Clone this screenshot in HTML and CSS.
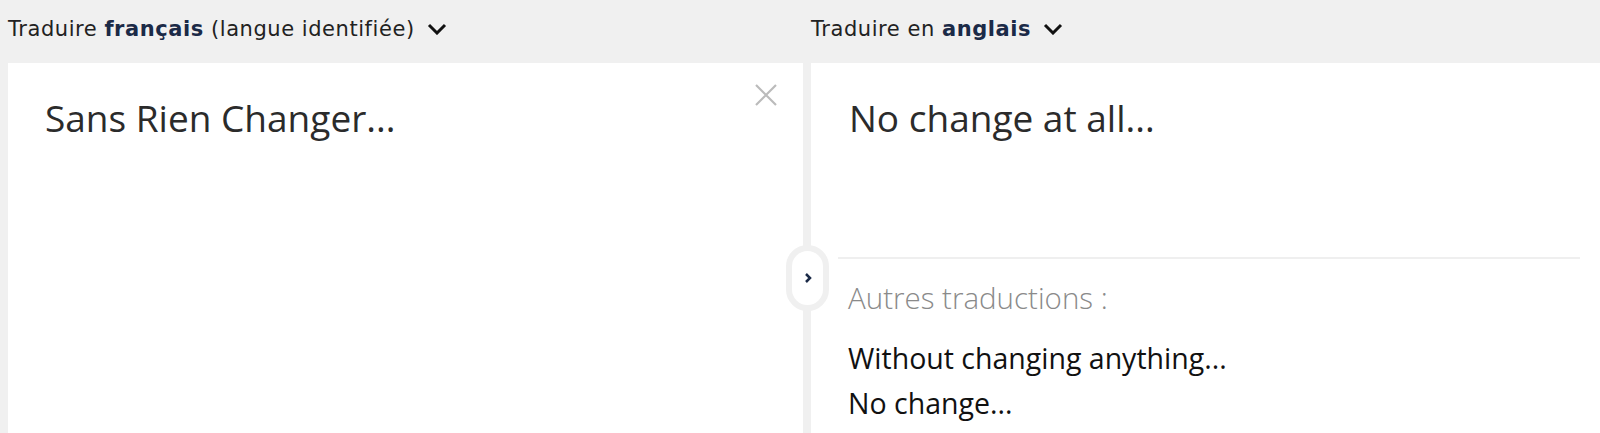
FILE: index.html
```html
<!DOCTYPE html>
<html lang="fr">
<head>
    <meta charset="UTF-8">
    <title>Traduire</title>
    <link rel="stylesheet" href="styles.css">
</head>
<body>
    <div id="translator">
        <div class="column">
            <div class="lang-bar">
                <span>Traduire <b>français</b> (langue identifiée)</span>
                <svg class="chevron" viewBox="0 0 20 12" width="20" height="12"><path d="M2 2 L10 10 L18 2" /></svg>
            </div>
            <div class="panel source">
                <div class="text">Sans Rien Changer...</div>
                <button class="clear" aria-label="Effacer">
                    <svg viewBox="0 0 22 22" width="22" height="22"><path d="M1 1 L21 21 M21 1 L1 21" /></svg>
                </button>
            </div>
        </div>
        <div class="column">
            <div class="lang-bar">
                <span>Traduire en <b>anglais</b></span>
                <svg class="chevron" viewBox="0 0 20 12" width="20" height="12"><path d="M2 2 L10 10 L18 2" /></svg>
            </div>
            <div class="panel target">
                <div class="text">No change at all...</div>
                <div class="others">
                    <div class="others-title">Autres traductions :</div>
                    <div class="others-item">Without changing anything...</div>
                    <div class="others-item">No change...</div>
                </div>
            </div>
        </div>
        <button id="swap" aria-label="Inverser">
            <svg viewBox="0 0 8 12" width="8" height="12"><path d="M2 2 L6 6 L2 10" /></svg>
        </button>
    </div>
</body>
</html>
```

FILE: styles.css
```css
body {
    margin: 0;
    background: #f0f0f0;
    font-family: 'Open Sans', sans-serif;
    color: #222;
    overflow: hidden;
}
#translator {
    position: relative;
    display: grid;
    grid-template-columns: 795px 1fr;
    column-gap: 8px;
    padding-left: 8px;
}
.lang-bar {
    height: 63px;
    display: flex;
    align-items: center;
    gap: 12px;
    font-family: 'DejaVu Sans', sans-serif;
    font-size: 21px;
    letter-spacing: 0.55px;
    color: #222;
    padding-bottom: 6px;
    box-sizing: border-box;
}
.lang-bar b {
    color: #1b2a47;
}
.chevron path {
    fill: none;
    stroke: #111;
    stroke-width: 3;
}
.panel {
    background: #fff;
    height: 380px;
    position: relative;
}
.text {
    font-size: 37px;
    color: #2b2b2b;
    line-height: 1;
}
.source .text {
    padding: 36px 0 0 37px;
}
.target .text {
    padding: 36px 0 0 38px;
    height: 158px;
}
.clear {
    position: absolute;
    top: 21px;
    right: 26px;
    border: none;
    background: none;
    padding: 0;
    cursor: pointer;
}
.clear path {
    stroke: #bbb;
    stroke-width: 2.2;
}
.others {
    margin: 0 20px 0 27px;
    border-top: 2px solid #efefef;
    padding: 18px 0 0 10px;
}
.others-title {
    font-size: 29.5px;
    font-weight: 300;
    color: #8a8a8a;
    margin-bottom: 18px;
}
.others-item {
    font-size: 28.5px;
    color: #111;
    line-height: 45px;
}
#swap {
    position: absolute;
    left: 786px;
    top: 245px;
    width: 43px;
    height: 66px;
    border: 6px solid #f0f0f0;
    border-radius: 22px;
    background: #fff;
    padding: 0;
    display: flex;
    align-items: center;
    justify-content: center;
    cursor: pointer;
}
#swap path {
    fill: none;
    stroke: #1b2a47;
    stroke-width: 2.5;
}
```
